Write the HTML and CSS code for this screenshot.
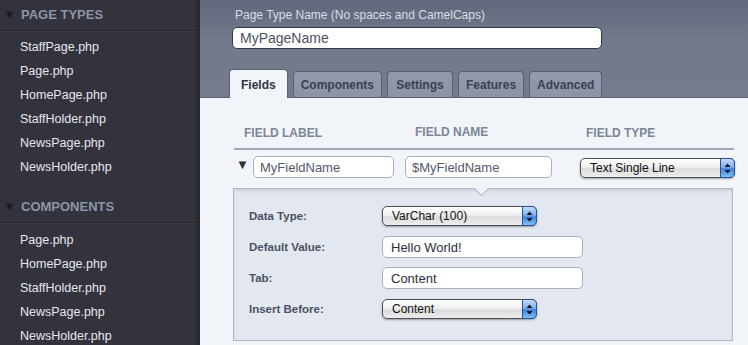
FILE: index.html
```html
<!DOCTYPE html>
<html lang="en">
<head>
  <meta charset="UTF-8" />
  <title>Page Type Builder</title>
  <link rel="stylesheet" href="styles.css">
</head>
<body>
  <div class="sidebar">
    <div class="side-head"><span class="tri">&#9660;</span>PAGE TYPES</div>
    <ul class="side-list">
      <li>StaffPage.php</li>
      <li>Page.php</li>
      <li>HomePage.php</li>
      <li>StaffHolder.php</li>
      <li>NewsPage.php</li>
      <li>NewsHolder.php</li>
    </ul>
    <div class="side-head second"><span class="tri">&#9660;</span>COMPONENTS</div>
    <ul class="side-list second">
      <li>Page.php</li>
      <li>HomePage.php</li>
      <li>StaffHolder.php</li>
      <li>NewsPage.php</li>
      <li>NewsHolder.php</li>
    </ul>
  </div>

  <div class="main">
    <div class="top">
      <div class="name-label">Page Type Name (No spaces and CamelCaps)</div>
      <input class="name-input" type="text" value="MyPageName">
    </div>

    <div class="tabs">
      <div class="tab active">Fields</div>
      <div class="tab">Components</div>
      <div class="tab">Settings</div>
      <div class="tab">Features</div>
      <div class="tab">Advanced</div>
    </div>

    <div class="content">
      <div class="fields-head">
        <span class="col-label">FIELD LABEL</span>
        <span class="col-name">FIELD NAME</span>
        <span class="col-type">FIELD TYPE</span>
      </div>

      <div class="field-row">
        <span class="row-tri">&#9660;</span>
        <input class="field-input label-input" type="text" value="MyFieldName">
        <input class="field-input name-field" type="text" value="$MyFieldName">
        <div class="aqua-select">
          <span>Text Single Line</span>
          <i class="stepper"><svg width="7" height="11" viewBox="0 0 7 11"><path d="M3.5 0.5 L6.5 4 L0.5 4 Z M0.5 7 L6.5 7 L3.5 10.5 Z" fill="#111"/></svg></i>
        </div>
      </div>

      <div class="panel">
        <div class="panel-row">
          <label>Data Type:</label>
          <div class="aqua-select">
            <span>VarChar (100)</span>
            <i class="stepper"><svg width="7" height="11" viewBox="0 0 7 11"><path d="M3.5 0.5 L6.5 4 L0.5 4 Z M0.5 7 L6.5 7 L3.5 10.5 Z" fill="#111"/></svg></i>
          </div>
        </div>
        <div class="panel-row">
          <label>Default Value:</label>
          <input class="panel-input" type="text" value="Hello World!">
        </div>
        <div class="panel-row">
          <label>Tab:</label>
          <input class="panel-input" type="text" value="Content">
        </div>
        <div class="panel-row">
          <label>Insert Before:</label>
          <div class="aqua-select">
            <span>Content</span>
            <i class="stepper"><svg width="7" height="11" viewBox="0 0 7 11"><path d="M3.5 0.5 L6.5 4 L0.5 4 Z M0.5 7 L6.5 7 L3.5 10.5 Z" fill="#111"/></svg></i>
          </div>
        </div>
      </div>
    </div>
  </div>
</body>
</html>
```

FILE: styles.css
```css
body {
  margin: 0;
  height: 345px;
  overflow: hidden;
  display: flex;
  font-family: 'Liberation Sans', Arial, sans-serif;
}

/* sidebar */
.sidebar {
  width: 196px;
  flex-shrink: 0;
  background: #33333d;
  border-right: 4px solid #2a2a31;
  color: #e6e6ec;
}

.side-head {
  height: 30px;
  line-height: 30px;
  font-size: 13px;
  font-weight: bold;
  color: #8c95a6;
  padding-left: 3px;
  border-bottom: 1px solid #202026;
  box-shadow: 0 1px 0 #3e3e48;
}

.side-head .tri {
  display: inline-block;
  width: 18px;
  font-size: 13px;
  color: #1d1d23;
}

.side-head.second {
  margin-top: 13px;
}

.side-list {
  list-style: none;
  margin: 0;
  padding: 4px 0 0 20px;
}

.side-list.second {
  padding-top: 5px;
}

.side-list li {
  height: 24px;
  line-height: 24px;
  font-size: 12.5px;
}

/* main area */
.main {
  flex: 1;
  display: flex;
  flex-direction: column;
  background: linear-gradient(#60677a, #737a8c 40px, #777e90);
}

.top {
  padding: 8px 0 0 32px;
}

.name-label {
  font-size: 12px;
  line-height: 14px;
  color: #d9dde5;
  padding-left: 3px;
}

.name-input {
  display: block;
  box-sizing: border-box;
  margin-top: 5px;
  width: 370px;
  height: 22px;
  border: 1px solid #333a48;
  border-radius: 5px;
  padding: 0 7px;
  font-family: inherit;
  font-size: 14px;
  color: #4b5162;
  background: #fff;
}

.tabs {
  margin-top: 20px;
  height: 28px;
  display: flex;
  align-items: flex-end;
  gap: 5px;
  padding-left: 29px;
}

.tab {
  box-sizing: border-box;
  min-width: 66px;
  height: 26px;
  line-height: 26px;
  padding: 0 7px;
  text-align: center;
  font-size: 12px;
  font-weight: bold;
  color: #3b4150;
  background: linear-gradient(#939bab, #8b93a4);
  border: 1px solid #5a6172;
  border-bottom: none;
  border-radius: 4px 4px 0 0;
}

.tab.active {
  min-width: 0;
  height: 29px;
  line-height: 31px;
  padding: 0 11px;
  margin-bottom: -1px;
  background: #f1f5f9;
  color: #2d3340;
  position: relative;
  z-index: 1;
}

.content {
  flex: 1;
  background: #f1f5f9;
  border-top: 1px solid #5a6172;
  padding-left: 34px;
}

.fields-head {
  margin-top: 27px;
  width: 500px;
  display: flex;
  font-size: 12px;
  font-weight: bold;
  line-height: 16px;
  color: #7d8597;
  padding-bottom: 7px;
  border-bottom: 2px solid #a1a9b8;
}

.col-label {
  padding-left: 10px;
  width: 171px;
}

.col-name {
  width: 171px;
  position: relative;
  top: -1px;
}

.field-row {
  margin-top: 6px;
  display: flex;
  align-items: center;
}

.row-tri {
  width: 19px;
  padding-left: 2px;
  box-sizing: border-box;
  font-size: 13px;
  color: #2a303c;
  position: relative;
  top: -3px;
}

.field-input {
  box-sizing: border-box;
  height: 22px;
  border: 1px solid #a9b0be;
  border-radius: 5px;
  padding: 0 6px;
  font-family: inherit;
  font-size: 13px;
  color: #545a6b;
  background: #fff;
}

.label-input {
  width: 141px;
  margin-right: 11px;
}

.name-field {
  width: 147px;
  margin-right: 28px;
}

.field-row .aqua-select {
  margin-top: 2px;
}

/* aqua style popup */
.aqua-select {
  position: relative;
  box-sizing: border-box;
  width: 155px;
  height: 20px;
  border: 1px solid #4a4f5a;
  border-radius: 5px;
  background: linear-gradient(#ffffff, #f0f0f0 45%, #dcdcdc 55%, #ececec);
  box-shadow: 0 1px 2px rgba(0, 0, 0, 0.35);
  font-size: 12px;
  line-height: 18px;
  color: #111;
  padding-left: 9px;
}

.stepper {
  position: absolute;
  top: -1px;
  right: -1px;
  width: 15px;
  height: 20px;
  box-sizing: border-box;
  border: 1px solid #2d4f92;
  border-radius: 0 5px 5px 0;
  background: linear-gradient(#c3dcf8, #7fb0ee 45%, #3f82de 55%, #7cc0f5);
  display: flex;
  align-items: center;
  justify-content: center;
}

/* expanded field panel */
.panel {
  position: relative;
  margin: 10px 0 0 -1px;
  width: 500px;
  box-sizing: border-box;
  height: 153px;
  background: #e3e8f0;
  border: 1px solid #adb4c2;
  box-shadow: inset 0 3px 4px -2px rgba(90, 100, 120, 0.25);
  padding: 16px 0 0 15px;
  display: flex;
  flex-direction: column;
  gap: 9px;
}

.panel::before {
  content: '';
  position: absolute;
  top: -6px;
  left: 242px;
  width: 10px;
  height: 10px;
  background: #f1f5f9;
  border-right: 1px solid #adb4c2;
  border-bottom: 1px solid #adb4c2;
  transform: rotate(45deg);
}

.panel-row {
  height: 22px;
  display: flex;
  align-items: center;
}

.panel-row label {
  width: 133px;
  font-size: 11.5px;
  font-weight: bold;
  color: #4a5062;
}

.panel-input {
  box-sizing: border-box;
  width: 201px;
  height: 22px;
  border: 1px solid #a9b0be;
  border-radius: 5px;
  padding: 0 8px;
  font-family: inherit;
  font-size: 13px;
  color: #2c313c;
  background: #fff;
}
```
